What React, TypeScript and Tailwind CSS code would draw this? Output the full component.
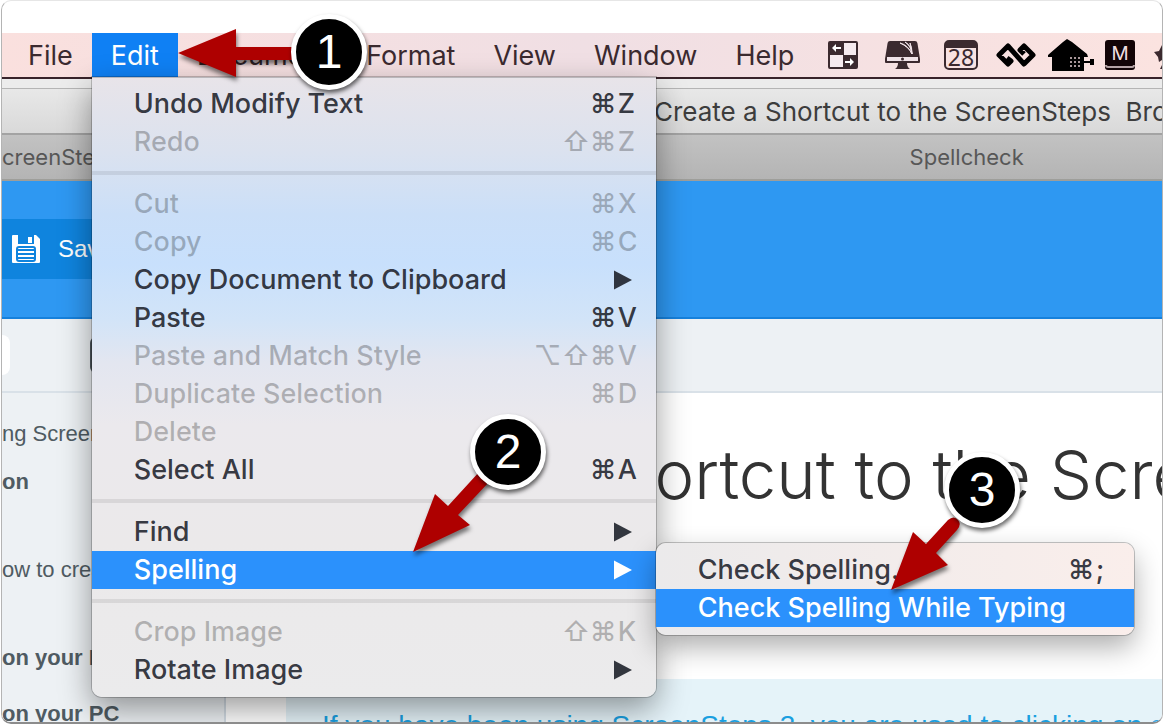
import React from 'react'
import clsx from 'clsx'

interface MenuEntry {
  label: string
  keys?: string[]
  disabled?: boolean
  active?: boolean
  submenu?: boolean
}

interface MenuItemProps {
  entry: MenuEntry
  children?: React.ReactNode
}

const EDIT_MENU: MenuEntry[][] = [
  [
    { label: 'Undo Modify Text', keys: ['⌘', 'Z'] },
    { label: 'Redo', keys: ['⇧', '⌘', 'Z'], disabled: true },
  ],
  [
    { label: 'Cut', keys: ['⌘', 'X'], disabled: true },
    { label: 'Copy', keys: ['⌘', 'C'], disabled: true },
    { label: 'Copy Document to Clipboard', submenu: true },
    { label: 'Paste', keys: ['⌘', 'V'] },
    { label: 'Paste and Match Style', keys: ['⌥', '⇧', '⌘', 'V'], disabled: true },
    { label: 'Duplicate Selection', keys: ['⌘', 'D'], disabled: true },
    { label: 'Delete', disabled: true },
    { label: 'Select All', keys: ['⌘', 'A'] },
  ],
  [
    { label: 'Find', submenu: true },
    { label: 'Spelling', submenu: true, active: true },
  ],
  [
    { label: 'Crop Image', keys: ['⇧', '⌘', 'K'], disabled: true },
    { label: 'Rotate Image', submenu: true },
  ],
]

const SPELLING_MENU: MenuEntry[] = [
  { label: 'Check Spelling...', keys: ['⌘', ';'] },
  { label: 'Check Spelling While Typing', active: true },
]

function keyClass(key: string) {
  return key === '⌘' || key === '⇧' || key === '⌥' ? 'w-7' : 'w-5'
}

function MenuItem({ entry, children }: MenuItemProps) {
  return (
    <li role="none" className="relative">
      <button
        type="button"
        role="menuitem"
        disabled={entry.disabled}
        className={clsx(
          'flex h-[38px] w-full items-center justify-between pl-[42px] pr-[18px] text-left font-[450] whitespace-nowrap',
          entry.active && 'bg-[#2b91fc] text-white',
          entry.disabled && 'text-black/25',
          !entry.active && !entry.disabled && 'text-[#1e222b]/90'
        )}
      >
        <span>{entry.label}</span>
        {entry.keys && (
          <span className="flex">
            {entry.keys.map((key) => (
              <span key={key} className={keyClass(key)}>
                {key}
              </span>
            ))}
          </span>
        )}
        {entry.submenu && (
          <svg width="18" height="20" viewBox="0 0 18 20" className="mr-1.5 fill-current">
            <path d="M0 0.5 18 10 0 19.5z" />
          </svg>
        )}
      </button>
      {children}
    </li>
  )
}

function SpellingMenu() {
  return (
    <ul
      role="menu"
      className="absolute left-full -top-2 w-[478px] rounded-[10px] bg-linear-to-r from-[#ebeaeb] to-[#faeeeb] py-2 shadow-[0_0_0_1px_rgba(0,0,0,0.22),0_12px_28px_rgba(0,0,0,0.32)]"
    >
      {SPELLING_MENU.map((entry) => (
        <MenuItem key={entry.label} entry={entry} />
      ))}
    </ul>
  )
}

function EditMenu() {
  return (
    <div
      role="menu"
      className="absolute left-0 top-full w-[564px] rounded-b-[10px] border-t border-[#b9b7bb] bg-[linear-gradient(to_bottom,#e8e4e9_0%,#dbe2ef_12%,#cbdff8_22%,#c8e0fc_30%,#d2e4f8_39%,#e3e6f0_46%,#ebe9ed_56%,#ebe9ea_75%,#ebebec_100%)] pt-[7px] pb-2 shadow-[0_0_0_1px_rgba(0,0,0,0.2),0_12px_32px_rgba(0,0,0,0.4)]"
    >
      {EDIT_MENU.map((group, i) => (
        <React.Fragment key={i}>
          {i > 0 && <hr className="my-2.5 h-1 border-0 bg-black/8" />}
          <ul role="none">
            {group.map((entry) => (
              <MenuItem key={entry.label} entry={entry}>
                {entry.label === 'Spelling' && <SpellingMenu />}
              </MenuItem>
            ))}
          </ul>
        </React.Fragment>
      ))}
    </div>
  )
}

function StatusIcons() {
  return (
    <div className="ml-auto flex h-11 shrink-0 items-center text-[#3b2a2f]">
      <svg width="30" height="28" viewBox="0 0 30 28" className="mr-[27px]">
        <rect x="1" y="1" width="28" height="26" rx="1" fill="#f5eaee" stroke="currentColor" strokeWidth="2" />
        <path d="M1 1h15v13H1zM15 14h14v13H15z" fill="currentColor" />
        <path d="M4 7l4-4v3h5v2H8v3zM26 21l-4-4v3h-5v2h5v3z" fill="#fff" />
      </svg>
      <svg width="35" height="28" viewBox="0 0 35 28" className="mr-6">
        <path d="M5 0h25q2 0 2.400 2L35 18v3q0 1-1 1H1q-1 0-1-1v-3L2.600 2Q3 0 5 0z" fill="currentColor" />
        <path d="M2 16h31v4H2z" fill="#f0e3e8" />
        <circle cx="17.500" cy="18" r="1.500" fill="currentColor" />
        <path d="M13 22h9q0 4 3 6H10q3-2 3-6z" fill="currentColor" />
        <path d="M15 2q8 2 12 11-3-7-12-11zM20 1q6 4 7 12 0-8-7-12zM25 2q2 4 2 11z" fill="#f0e3e8" stroke="#f0e3e8" />
      </svg>
      <svg width="34" height="30" viewBox="0 0 34 30" className="mr-[18px]">
        <rect x="1" y="1" width="32" height="28" rx="4" fill="none" stroke="currentColor" strokeWidth="2" />
        <path d="M1 8V5q0-4 4-4h24q4 0 4 4v3z" fill="currentColor" />
        <text x="17" y="26" textAnchor="middle" fontSize="23" fontFamily="Noto Sans" fill="currentColor">
          28
        </text>
      </svg>
      <svg width="40" height="24" viewBox="0 0 40 24" className="mr-3" fill="none" stroke="#000" strokeWidth="5" strokeLinejoin="round">
        <path d="M11 15l4 3-3 3-9-9 9-9 16 18 9-9-9-9-4 4 4 4" />
      </svg>
      <svg width="46" height="32" viewBox="0 0 46 32" className="mr-[11px]" fill="#000">
        <path d="M19 0l5 3 15 12 1 3h-4v14H4V18H0v-2L15 3z" />
        <path d="M36 22h6v-2h4v6h-4v-2h-6z" />
        {[19, 23, 27].map((y) => (
          <path key={y} d={`M22 ${y}h10`} stroke="#a8979a" strokeWidth="2" strokeDasharray="2 2" />
        ))}
      </svg>
      <svg width="30" height="30" viewBox="0 0 30 30" className="mr-[19px]">
        <rect width="30" height="30" rx="3" fill="#120406" />
        <path d="M1 25q0 2 2 2h24q2 0 2-2" fill="none" stroke="#b5a3a5" strokeWidth="2" />
        <text x="15" y="20" textAnchor="middle" fontSize="19" fontFamily="Inter" fill="#f0dfe0">
          M
        </text>
      </svg>
      <svg width="8" height="28" viewBox="0 0 8 28">
        <path d="M8 4v15l-3 2-1-5-4-5 5-1zM8 24l-2 4h2z" fill="currentColor" />
      </svg>
    </div>
  )
}

function MenuBar() {
  return (
    <nav className="relative z-10 flex h-[46px] border-b-2 border-[#38232a] bg-linear-to-r from-[#fae0de] via-[#f0dfe4] to-[#fbe3e0] text-[#3b2a2f]">
      <ul role="menubar" className="flex h-11 pl-[7px] whitespace-nowrap">
        <li role="none">
          <button type="button" role="menuitem" className="h-full px-[19px] pt-0.5">File</button>
        </li>
        <li role="none" className="relative">
          <button type="button" role="menuitem" className="h-full bg-[#0f80f4] px-[19px] pt-0.5 text-white">Edit</button>
          <EditMenu />
        </li>
        {['Document', 'Format', 'View', 'Window', 'Help'].map((label) => (
          <li role="none" key={label}>
            <button type="button" role="menuitem" className="h-full px-[19px] pt-0.5">{label}</button>
          </li>
        ))}
      </ul>
      <StatusIcons />
    </nav>
  )
}

interface CalloutProps {
  number: number
  position: string
  children: React.ReactNode
}

function Callout({ number, position, children }: CalloutProps) {
  return (
    <div className={clsx('absolute z-20 size-[76px]', position)}>
      <svg width="76" height="76" className="absolute inset-0 overflow-visible fill-[#ae0000] drop-shadow-[1px_4px_2px_rgba(0,0,0,0.5)]">
        {children}
      </svg>
      <div className="relative flex size-full items-center justify-center rounded-full border-[5px] border-white bg-black font-['Liberation_Sans',sans-serif] text-[48px] leading-none text-white shadow-[1px_3px_4px_rgba(0,0,0,0.6)]">
        {number}
      </div>
    </div>
  )
}

export default function App() {
  return (
    <div className="h-screen bg-white px-px pb-0.5 font-[Inter,sans-serif] text-[27px]">
      <div className="relative flex h-full flex-col overflow-hidden rounded-[10px] border border-b-2 border-[#b4b4b4] border-t-[#e6e6e6] border-b-[#8c8c8c]">
        <div className="h-8 shrink-0" />
        <MenuBar />

        <div className="h-2.5 shrink-0 border-b border-[#b5b5b5] bg-[#ececec]" />
        <div className="flex h-[46px] shrink-0 items-center overflow-hidden border-b-2 border-[#a3a3a3] bg-linear-to-b from-[#e8e8e8] to-[#d9d9d9] pl-[652px] text-[26px] whitespace-pre text-[#3d3d3d]">
          Create a Shortcut to the ScreenSteps  Browser
        </div>
        <div className="grid h-[46px] shrink-0 grid-cols-[2fr_1fr] items-center border-b-2 border-[#9e9e9a] bg-linear-to-b from-[#c2c2c2] to-[#b4b4b4] text-[22px] text-[#575757]">
          <span>creenSteps</span>
          <span className="pr-1 text-center">Spellcheck</span>
        </div>

        <div className="flex h-[138px] shrink-0 items-center border-b-2 border-[#1681dc] bg-[#2e98f2]">
          <button type="button" className="flex h-[60px] items-center bg-[#0f84de] pl-2.5 pr-6 font-['Liberation_Sans',sans-serif] text-[24px] text-white">
            <svg width="28" height="28" viewBox="0 0 28 28" className="mr-[18px]">
              <path d="M1 0h5v9h16V0h2l4 4v23q0 1-1 1H1q-1 0-1-1V1q0-1 1-1z" fill="#fff" />
              <path d="M16 2h4v6h-4z" fill="#fff" />
              <rect x="5" y="12" width="18" height="14" rx="2" fill="#fff" stroke="#0f84de" strokeWidth="2" />
              <path d="M6 15h16M6 19h16M6 23h16" stroke="#0f84de" strokeWidth="2" />
            </svg>
            Save
          </button>
        </div>

        <div className="flex h-[74px] shrink-0 items-center justify-between border-b-2 border-[#d9e1e8] bg-[#edf1f4]">
          <div className="h-10 w-2 rounded-r-full bg-white" />
          <div className="mr-auto ml-20 h-9 w-20 rounded-md bg-[#4c555c]" />
        </div>

        <div className="flex min-h-0 grow">
          <aside className="w-[224px] shrink-0 overflow-hidden border-r-2 border-[#d3dce4] bg-[#edf1f4] pt-[27px] font-['Liberation_Sans',sans-serif] text-[22px] leading-7 whitespace-nowrap text-[#4f5b62]">
            <p>ng ScreenSteps</p>
            <p className="mt-5 font-bold">on</p>
            <p className="mt-[60px]">ow to create</p>
            <p className="mt-[60px] font-bold">on your Mac</p>
            <p className="mt-7 font-bold">on your PC</p>
          </aside>
          <main className="min-w-0 grow overflow-hidden pt-10 pl-[60px] whitespace-nowrap">
            <h1 className="pl-1.5 text-[67px] leading-[84px] font-light text-[#333]">
              Create a Shortcut to the ScreenSteps
            </h1>
            <div className="mt-[162px] bg-[#e5f3f9] px-9 pt-[26px] pb-10 font-['Liberation_Sans',sans-serif] text-[28px] text-[#1a9fe0]">
              If you have been using ScreenSteps 3, you are used to clicking on a
            </div>
          </main>
        </div>

        <Callout number={1} position="left-[289px] top-[13px]">
          <path d="M-113 39-55 15v18H10v13H-55v17z" />
        </Callout>
        <Callout number={2} position="left-[468px] top-[413px]">
          <path d="M-57 138-35 80l13 12L10 57l10 10-32 34 12 10z" />
        </Callout>
        <Callout number={3} position="left-[942px] top-[451px]">
          <path d="M-53 138-31 80l13 12L4 68q6-5 10 0 4 4-1 10L-8 101l12 12z" />
        </Callout>
      </div>
    </div>
  )
}
